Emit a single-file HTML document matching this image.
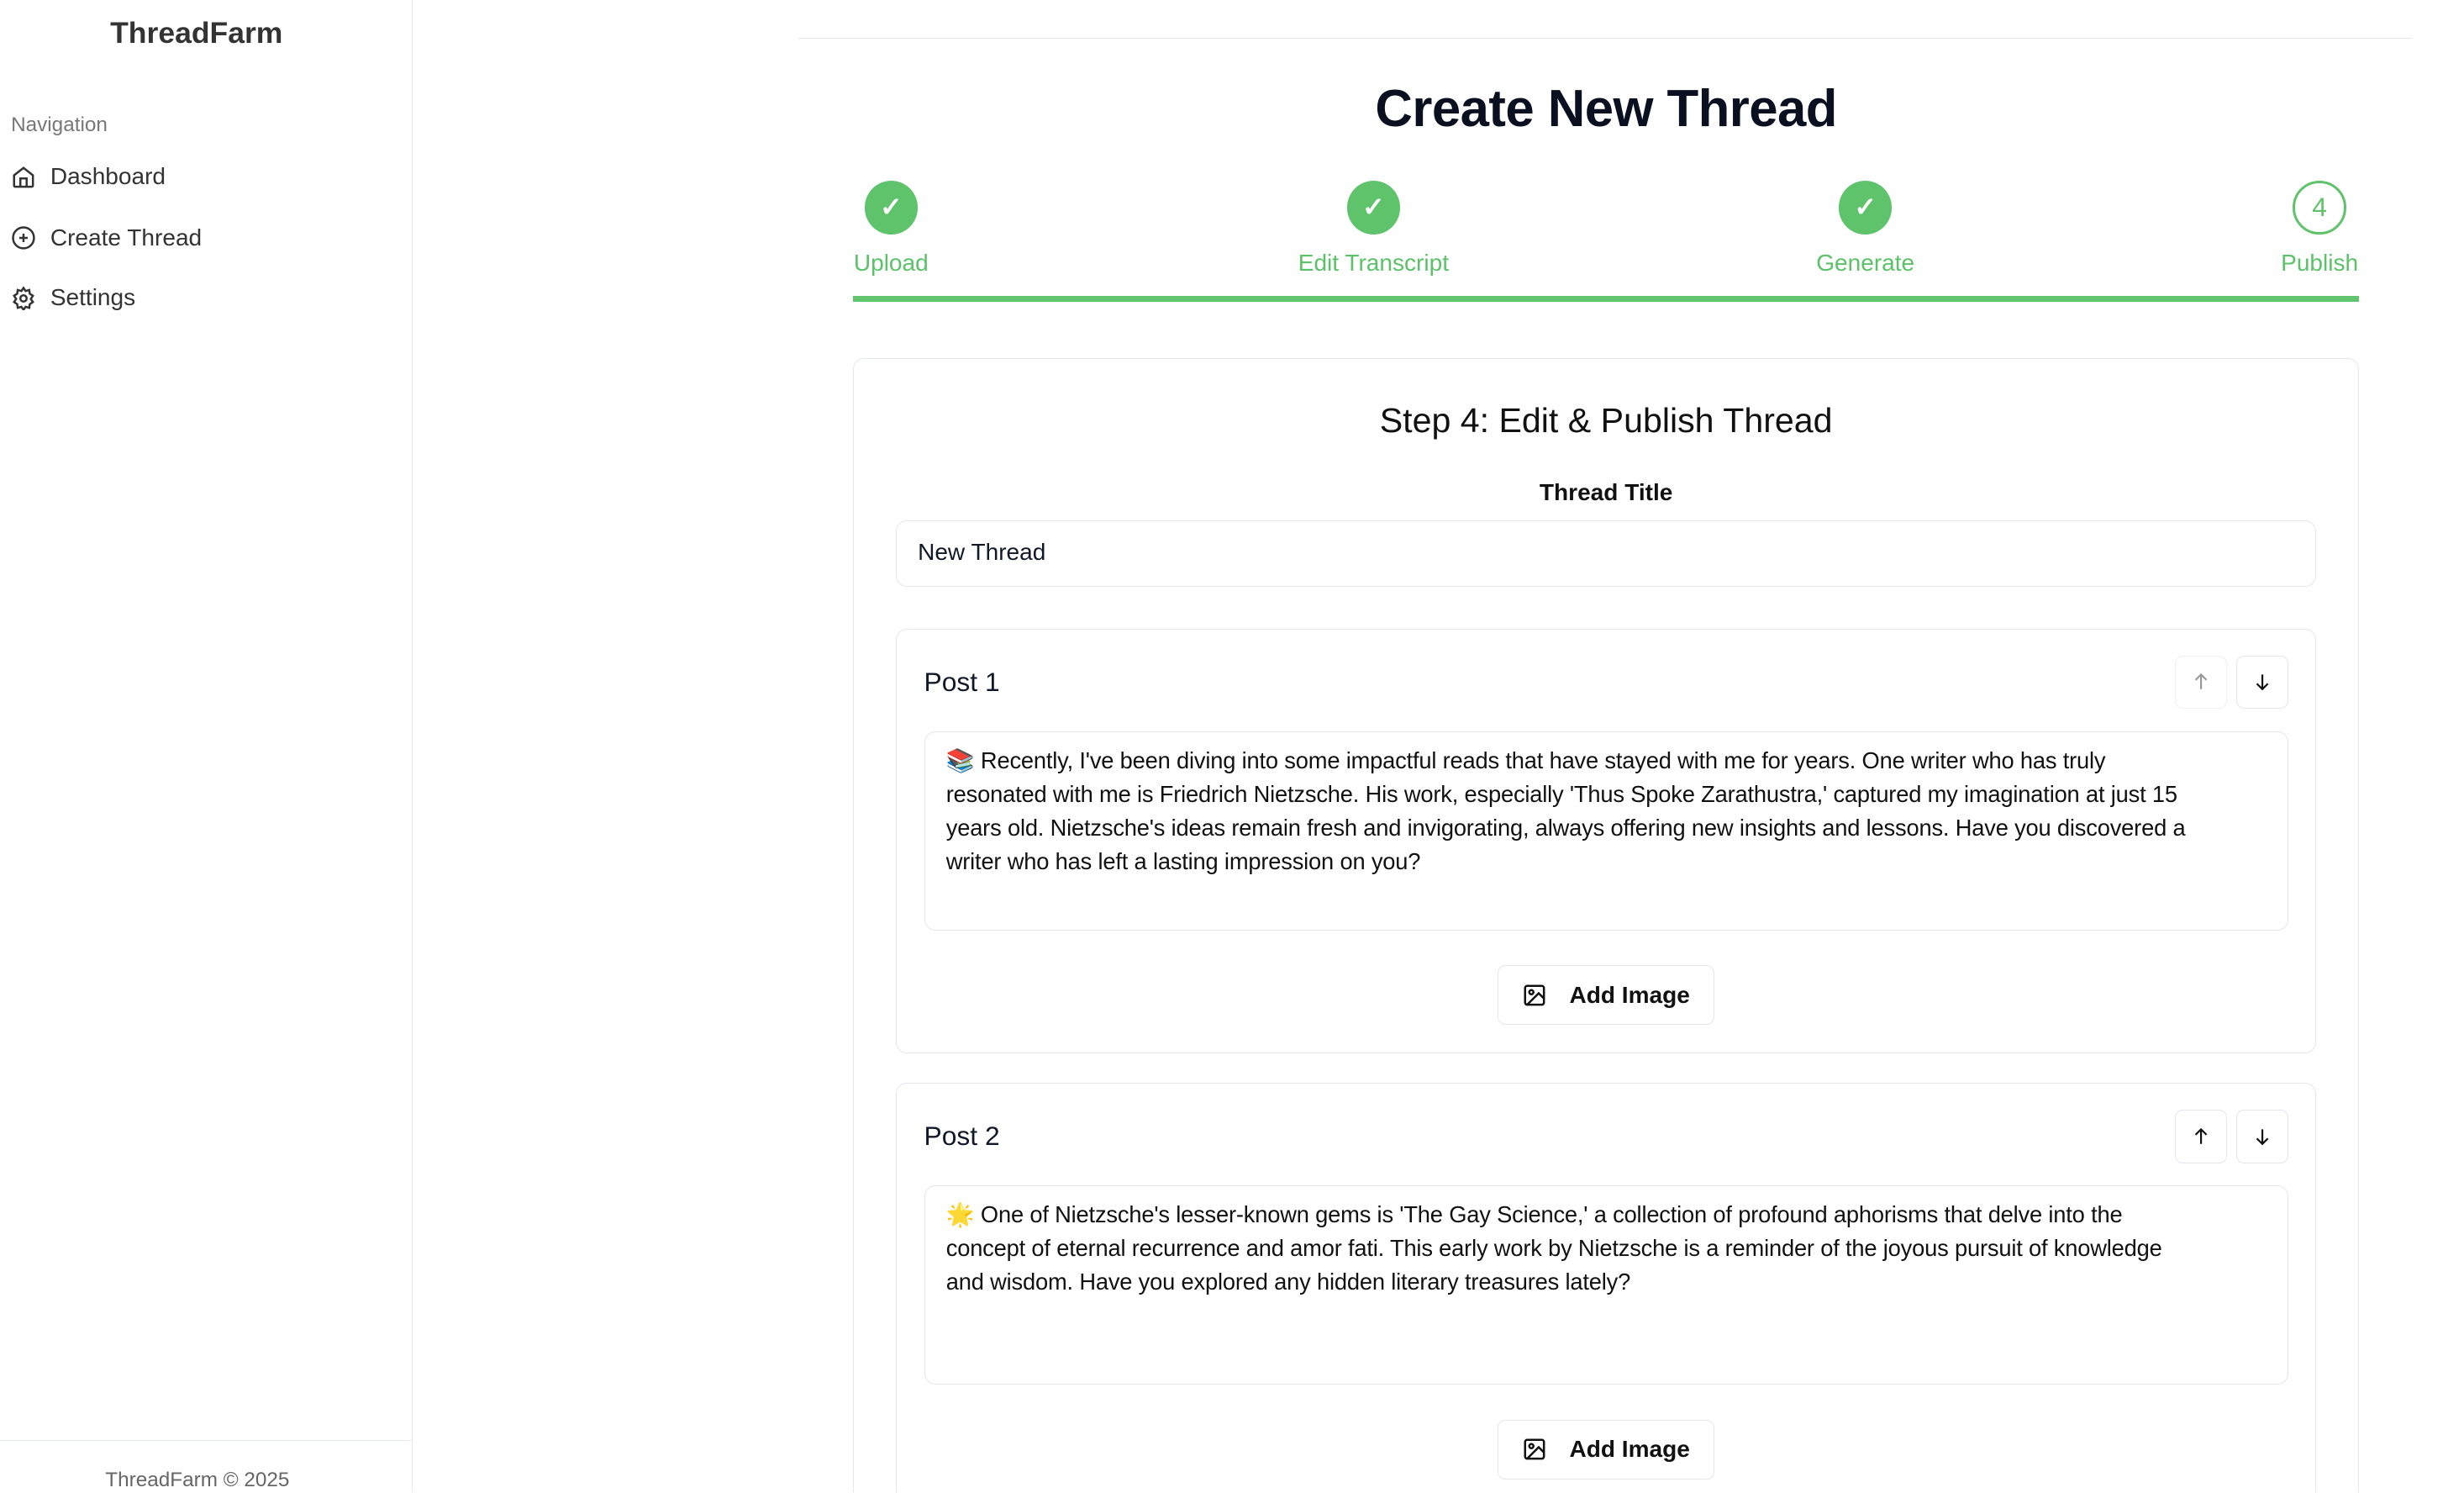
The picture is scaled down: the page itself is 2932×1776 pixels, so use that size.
<!DOCTYPE html>
<html><head><meta charset="utf-8"><style>
html,body{margin:0;padding:0;background:#fff;overflow:hidden;}
.page{width:1568px;height:949px;zoom:1.87;position:relative;overflow:hidden;font-family:"Liberation Sans",sans-serif;color:#111827;}
.a{position:absolute;}
.side{left:0;top:0;width:262px;height:950px;border-right:1px solid #e5e9f0;}
.nav{left:7px;font-size:15px;color:#333;display:flex;align-items:center;gap:9px;}
.nav svg{width:16px;height:16px;}
.circ{width:34px;height:34px;border-radius:50%;background:#5fc36b;color:#fff;display:flex;align-items:center;justify-content:center;font-size:17px;font-weight:bold;}
.lbl{font-size:15px;color:#5cc26a;transform:translateX(-50%);white-space:nowrap;}
.box{border:1px solid #e3e7ec;border-radius:7px;box-sizing:border-box;background:#fff;}
.btn{border:1px solid #e3e7ec;border-radius:5px;box-sizing:border-box;display:flex;align-items:center;justify-content:center;}
.ta{font-size:14.6px;line-height:21.5px;color:#111;white-space:nowrap;letter-spacing:-0.1px;}
.add{font-size:15px;font-weight:bold;color:#111;gap:14px;}
</style></head><body><div class="page">
<div class="a side"></div>
<div class="a" style="left:0;width:262px;top:10px;text-align:center;font-size:19px;font-weight:bold;color:#333;transform:translateX(-6px)">ThreadFarm</div>
<div class="a" style="left:7px;top:72px;font-size:13px;color:#777">Navigation</div>
<div class="a nav" style="top:104px"><svg viewBox="0 0 24 24" fill="none" stroke="#333" stroke-width="2"><path d="M3 10l9-7 9 7v10a1 1 0 0 1-1 1H4a1 1 0 0 1-1-1z"/><path d="M9 21v-8h6v8"/></svg>Dashboard</div>
<div class="a nav" style="top:143px"><svg viewBox="0 0 24 24" fill="none" stroke="#333" stroke-width="2"><circle cx="12" cy="12" r="10"/><path d="M12 8v8M8 12h8"/></svg>Create Thread</div>
<div class="a nav" style="top:181px"><svg viewBox="0 0 24 24" fill="none" stroke="#333" stroke-width="2"><circle cx="12" cy="12" r="3"/><path d="M12 2l2 3 3.5-1 .5 3.5 3 2-2 3 2 3-3 2-.5 3.5-3.5-1-2 3-2-3-3.5 1-.5-3.5-3-2 2-3-2-3 3-2 .5-3.5 3.5 1z"/></svg>Settings</div>
<div class="a" style="left:0;top:916px;width:262px;border-top:1px solid #e5e9f0"></div>
<div class="a" style="left:67px;top:934px;font-size:13px;color:#666">ThreadFarm © 2025</div>

<div class="a" style="left:508px;top:24px;width:1027px;border-top:1px solid #e3e6ea"></div>
<div class="a" style="left:543px;width:958px;top:50px;text-align:center;font-size:33px;font-weight:bold;color:#0b1020;letter-spacing:-0.3px">Create New Thread</div>

<div class="a circ" style="left:550px;top:115px">✓</div>
<div class="a circ" style="left:857px;top:115px">✓</div>
<div class="a circ" style="left:1170px;top:115px">✓</div>
<div class="a circ" style="left:1459px;top:115px;background:#fff;border:2px solid #5fc36b;box-sizing:border-box;color:#5fc36b;font-weight:normal">4</div>
<div class="a lbl" style="left:567px;top:159px">Upload</div>
<div class="a lbl" style="left:874px;top:159px">Edit Transcript</div>
<div class="a lbl" style="left:1187px;top:159px">Generate</div>
<div class="a lbl" style="left:1476px;top:159px">Publish</div>
<div class="a" style="left:543px;top:188px;width:958px;height:4px;background:#62c46d"></div>

<div class="a box" style="left:543px;top:228px;width:958px;height:800px"></div>
<div class="a" style="left:543px;width:958px;top:255px;text-align:center;font-size:22px;color:#111">Step 4: Edit &amp; Publish Thread</div>
<div class="a" style="left:543px;width:958px;top:305px;text-align:center;font-size:15px;font-weight:bold;color:#111">Thread Title</div>
<div class="a box" style="left:570px;top:331px;width:904px;height:42px;"></div>
<div class="a" style="left:584px;top:343px;font-size:15px">New Thread</div>

<div class="a box" style="left:570px;top:400px;width:904px;height:270px"></div>
<div class="a" style="left:588px;top:424px;font-size:17px">Post 1</div>
<div class="a btn" style="left:1384px;top:417px;width:33px;height:34px;border-color:#eef0f3"><svg width="14" height="14" viewBox="0 0 24 24" fill="none" stroke="#999" stroke-width="2"><path d="M12 20V4M6 10l6-6 6 6"/></svg></div>
<div class="a btn" style="left:1423px;top:417px;width:33px;height:34px"><svg width="14" height="14" viewBox="0 0 24 24" fill="none" stroke="#111" stroke-width="2"><path d="M12 4v16M6 14l6 6 6-6"/></svg></div>
<div class="a box" style="left:588px;top:465px;width:868px;height:127px"></div>
<div class="a ta" style="left:602px;top:473px">📚 Recently, I've been diving into some impactful reads that have stayed with me for years. One writer who has truly<br>resonated with me is Friedrich Nietzsche. His work, especially 'Thus Spoke Zarathustra,' captured my imagination at just 15<br>years old. Nietzsche's ideas remain fresh and invigorating, always offering new insights and lessons. Have you discovered a<br>writer who has left a lasting impression on you?</div>
<div class="a btn add" style="left:953px;top:614px;width:138px;height:38px"><svg width="16" height="16" viewBox="0 0 24 24" fill="none" stroke="#111" stroke-width="2"><rect x="3" y="3" width="18" height="18" rx="2"/><circle cx="9" cy="9" r="2"/><path d="M21 15l-5-5L5 21"/></svg>Add Image</div>

<div class="a box" style="left:570px;top:689px;width:904px;height:320px"></div>
<div class="a" style="left:588px;top:713px;font-size:17px">Post 2</div>
<div class="a btn" style="left:1384px;top:706px;width:33px;height:34px"><svg width="14" height="14" viewBox="0 0 24 24" fill="none" stroke="#111" stroke-width="2"><path d="M12 20V4M6 10l6-6 6 6"/></svg></div>
<div class="a btn" style="left:1423px;top:706px;width:33px;height:34px"><svg width="14" height="14" viewBox="0 0 24 24" fill="none" stroke="#111" stroke-width="2"><path d="M12 4v16M6 14l6 6 6-6"/></svg></div>
<div class="a box" style="left:588px;top:754px;width:868px;height:127px"></div>
<div class="a ta" style="left:602px;top:762px">🌟 One of Nietzsche's lesser-known gems is 'The Gay Science,' a collection of profound aphorisms that delve into the<br>concept of eternal recurrence and amor fati. This early work by Nietzsche is a reminder of the joyous pursuit of knowledge<br>and wisdom. Have you explored any hidden literary treasures lately?</div>
<div class="a btn add" style="left:953px;top:903px;width:138px;height:38px"><svg width="16" height="16" viewBox="0 0 24 24" fill="none" stroke="#111" stroke-width="2"><rect x="3" y="3" width="18" height="18" rx="2"/><circle cx="9" cy="9" r="2"/><path d="M21 15l-5-5L5 21"/></svg>Add Image</div>
</div></body></html>
